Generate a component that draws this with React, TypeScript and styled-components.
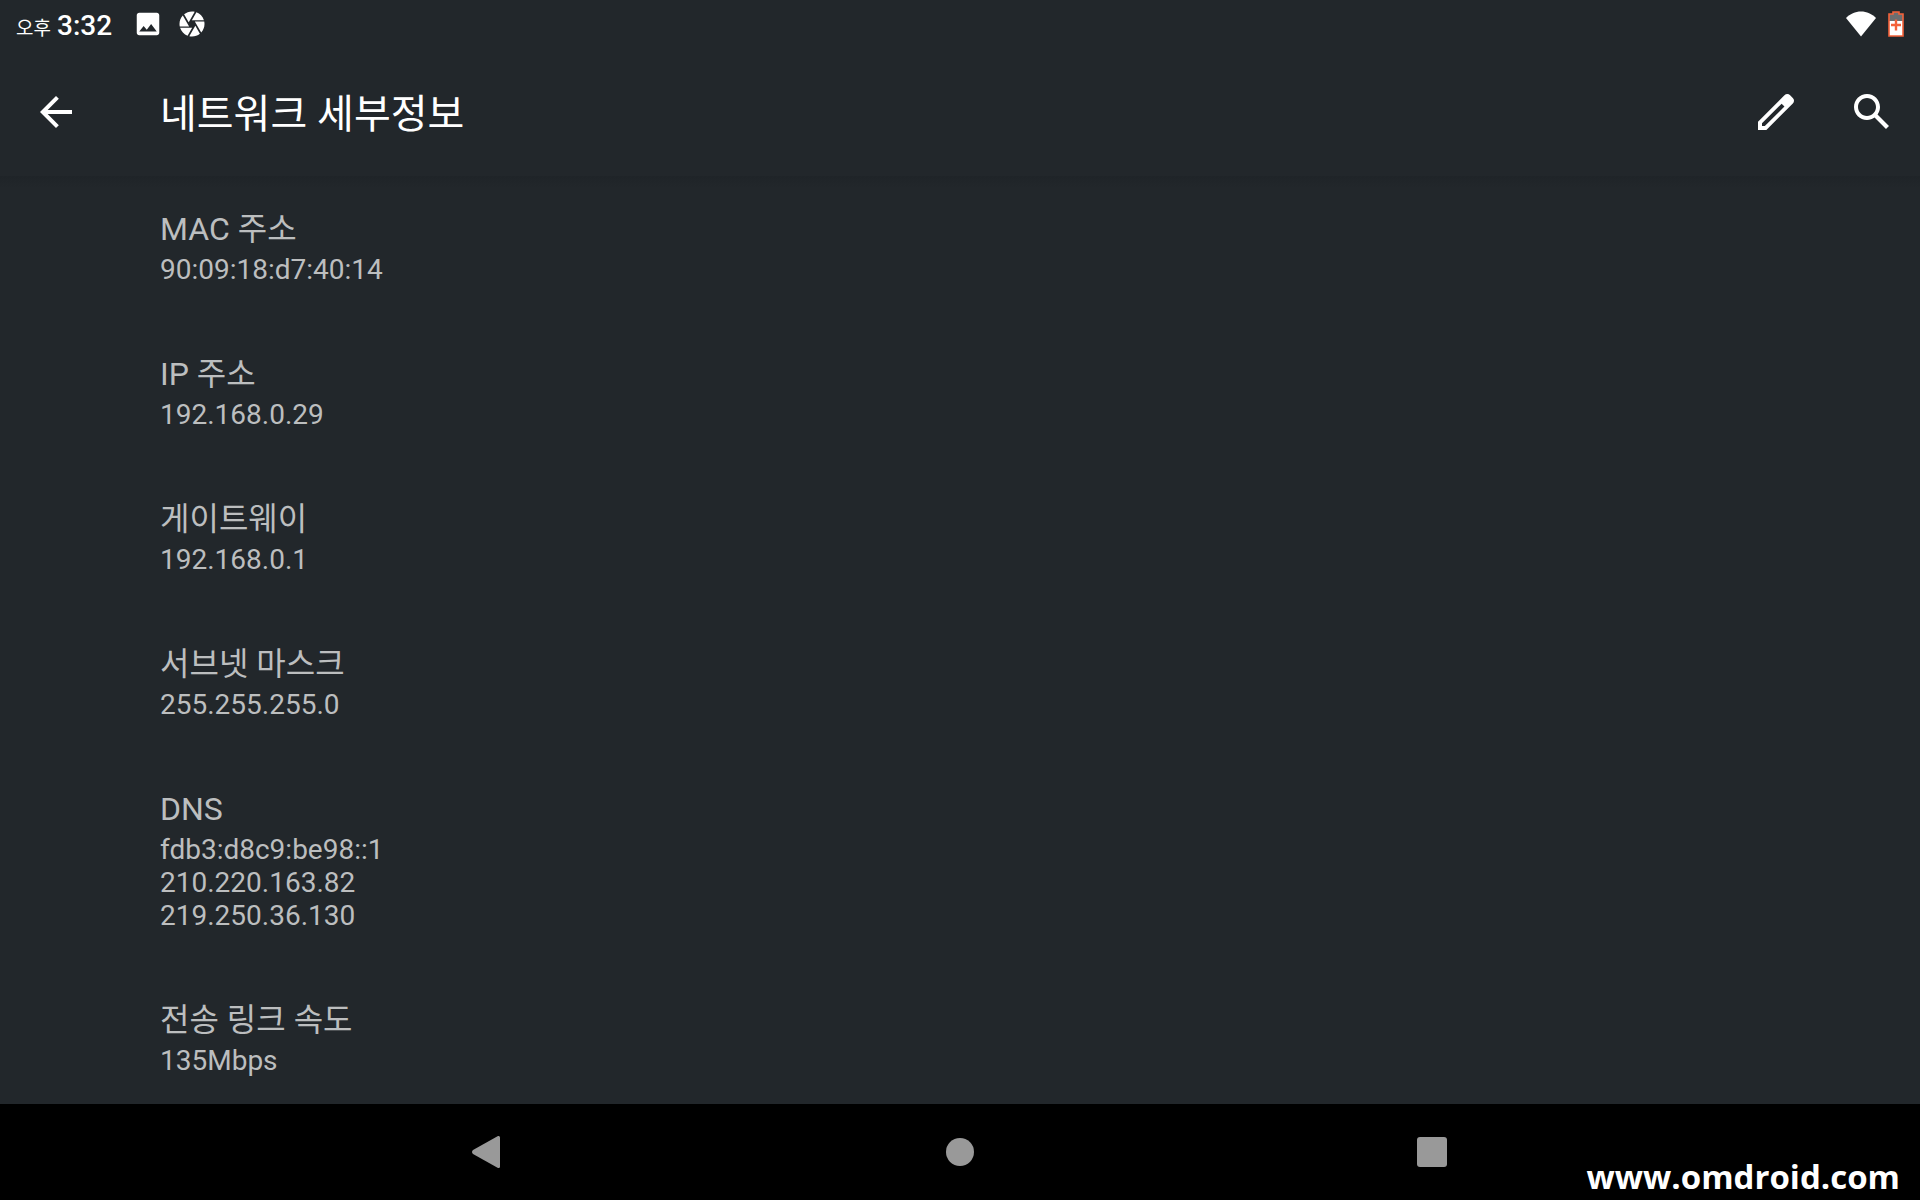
import React from "react";
import styled, { createGlobalStyle } from "styled-components";

const GlobalStyle = createGlobalStyle`
  *, *::before, *::after { box-sizing: border-box; }
  body {
    margin: 0;
    background: #22272b;
    font-family: Roboto, "Noto Sans CJK KR", sans-serif;
  }
`;

const Screen = styled.div`
  display: flex;
  flex-direction: column;
  height: 100vh;
  background: #22272b;
  color: #fff;
`;

const StatusBar = styled.div`
  display: flex;
  flex: none;
  align-items: center;
  justify-content: space-between;
  height: 48px;
  padding: 0 16px;
`;

const StatusGroup = styled.div<{ $gap: number }>`
  display: flex;
  align-items: center;
  gap: ${(p) => p.$gap}px;
`;

const Clock = styled.time`
  margin-right: 7px;
  padding-top: 6px;
  font-size: 28px;
  font-weight: 500;
  line-height: 32px;
`;

const Meridiem = styled.span`
  margin-right: 6px;
  font-size: 19px;
  font-weight: 400;
`;

const AppBar = styled.header`
  display: flex;
  flex: none;
  align-items: center;
  height: 128px;
  padding: 0 24px 0 32px;
`;

const Title = styled.h1`
  flex: 1;
  margin: 0;
  padding: 6px 0 0 80px;
  font-size: 40px;
  font-weight: 400;
  line-height: 48px;
`;

const Actions = styled.div`
  display: flex;
  gap: 48px;
`;

const IconButton = styled.button`
  display: flex;
  padding: 0;
  border: 0;
  background: none;
  color: inherit;
  cursor: pointer;
`;

const Details = styled.dl`
  flex: 1;
  min-height: 0;
  margin: 0;
  overflow-y: auto;
  scrollbar-width: none;
  background: linear-gradient(#1f2428, #22272b 12px);
`;

const Row = styled.div`
  display: flex;
  flex-direction: column;
  gap: 5px;
  padding: 34px 32px 35px 160px;
  color: #bcbebf;
`;

const Label = styled.dt`
  font-size: 32px;
  line-height: 38px;
`;

const Value = styled.dd`
  margin: 0;
  font-size: 28px;
  line-height: 33px;
  white-space: pre-line;
`;

const NavBar = styled.nav`
  position: relative;
  display: flex;
  flex: none;
  align-items: center;
  justify-content: center;
  gap: 392px;
  height: 96px;
  background: #000;
  color: #999;
`;

const Watermark = styled.span`
  position: absolute;
  right: 20px;
  bottom: 3px;
  color: #fff;
  font-family: "Open Sans", "Noto Sans", sans-serif;
  font-size: 33px;
  font-weight: 700;
  line-height: 40px;
`;

interface GlyphProps {
  d: string;
  size: number;
}

const Glyph = ({ d, size }: GlyphProps) => (
  <svg width={size} height={size} viewBox="0 0 24 24" fill="currentColor" aria-hidden="true">
    <path d={d} />
  </svg>
);

const paths = {
  back: "M20 11H7.83l5.59-5.59L12 4l-8 8 8 8 1.41-1.41L7.83 13H20v-2z",
  edit: "M20.41 4.94l-1.35-1.35c-.78-.78-2.05-.78-2.83 0L3 16.82V21h4.18L20.41 7.77c.79-.78.79-2.05 0-2.83zM6.41 19.06L5 19v-1.36l9.82-9.82 1.41 1.41z",
  search:
    "M20.49 19l-5.73-5.73C15.53 12.2 16 10.91 16 9.5 16 5.91 13.09 3 9.5 3S3 5.91 3 9.5 5.91 16 9.5 16c1.41 0 2.7-.47 3.77-1.24L19 20.49 20.49 19zM5 9.5C5 7.01 7.01 5 9.5 5S14 7.01 14 9.5 11.99 14 9.5 14 5 11.99 5 9.5z",
  image:
    "M21 19V5c0-1.1-.9-2-2-2H5c-1.1 0-2 .9-2 2v14c0 1.1.9 2 2 2h14c1.1 0 2-.9 2-2zM8.5 13.5l2.5 3.01L14.5 12l4.5 6H5l3.5-4.5z",
  shutter:
    "M9.4 10.5l4.77-8.26C13.47 2.09 12.75 2 12 2c-2.4 0-4.6.85-6.32 2.25l3.66 6.35.06-.1zM21.54 9c-.92-2.92-3.15-5.26-6-6.34L11.88 9h9.66zm.26 1h-7.49l.29.5 4.76 8.25C21 16.97 22 14.61 22 12c0-.69-.07-1.35-.2-2zM8.54 12l-3.9-6.75C3.01 7.03 2 9.39 2 12c0 .69.07 1.35.2 2h7.49l-1.15-2zm-6.08 3c.92 2.92 3.15 5.26 6 6.34L12.12 15H2.46zm11.27 0l-3.9 6.76c.7.15 1.42.24 2.17.24 2.4 0 4.6-.85 6.32-2.25l-3.66-6.35-.93 1.6z",
};

const WifiIcon = () => (
  <svg width="30" height="26" viewBox="0 0 30 26" fill="#fff" role="img" aria-label="Wi-Fi">
    <path d="M15 25.5L0 7C4 3 9.3 .5 15 .5S26 3 30 7z" />
  </svg>
);

const BatteryIcon = () => (
  <svg width="16" height="26" viewBox="0 0 16 26" role="img" aria-label="배터리">
    <path d="M1 3h4V1h6v2h4v7H1z" fill="#6b6e70" />
    <path d="M1 10h14v15H1z" fill="#fff" />
    <path d="M1 3h4V1h6v2h4v22H1z" fill="none" stroke="#f4623a" strokeWidth="1.6" />
    <path d="M6.800 8.500h2.400v4.300h3.800v2.400H9.200v4.300H6.800v-4.300H3v-2.400h3.800z" fill="#f4623a" />
  </svg>
);

const details = [
  { label: "MAC 주소", value: "90:09:18:d7:40:14" },
  { label: "IP 주소", value: "192.168.0.29" },
  { label: "게이트웨이", value: "192.168.0.1" },
  { label: "서브넷 마스크", value: "255.255.255.0" },
  { label: "DNS", value: "fdb3:d8c9:be98::1\n210.220.163.82\n219.250.36.130" },
  { label: "전송 링크 속도", value: "135Mbps" },
];

export default function App() {
  return (
    <Screen>
      <GlobalStyle />
      <StatusBar>
        <StatusGroup $gap={14}>
          <Clock dateTime="15:32">
            <Meridiem>오후</Meridiem>3:32
          </Clock>
          <Glyph d={paths.image} size={30} />
          <Glyph d={paths.shutter} size={30} />
        </StatusGroup>
        <StatusGroup $gap={12}>
          <WifiIcon />
          <BatteryIcon />
        </StatusGroup>
      </StatusBar>
      <AppBar>
        <IconButton type="button" aria-label="뒤로">
          <Glyph d={paths.back} size={48} />
        </IconButton>
        <Title>네트워크 세부정보</Title>
        <Actions>
          <IconButton type="button" aria-label="수정">
            <Glyph d={paths.edit} size={48} />
          </IconButton>
          <IconButton type="button" aria-label="검색">
            <Glyph d={paths.search} size={48} />
          </IconButton>
        </Actions>
      </AppBar>
      <Details>
        {details.map((item) => (
          <Row key={item.label}>
            <Label>{item.label}</Label>
            <Value>{item.value}</Value>
          </Row>
        ))}
      </Details>
      <NavBar>
        <IconButton type="button" aria-label="이전">
          <svg width="80" height="56" viewBox="0 0 80 56" fill="currentColor" aria-hidden="true">
            <path d="M52 13.5v29q0 2-2 1.500L25 30q-2-2 0-4L50 12q2-.5 2 1.500z" />
          </svg>
        </IconButton>
        <IconButton type="button" aria-label="홈">
          <svg width="80" height="56" viewBox="0 0 80 56" fill="currentColor" aria-hidden="true">
            <circle cx="40" cy="28" r="14" />
          </svg>
        </IconButton>
        <IconButton type="button" aria-label="최근 앱">
          <svg width="80" height="56" viewBox="0 0 80 56" fill="currentColor" aria-hidden="true">
            <rect x="25" y="13" width="30" height="30" rx="3" />
          </svg>
        </IconButton>
        <Watermark>www.omdroid.com</Watermark>
      </NavBar>
    </Screen>
  );
}
